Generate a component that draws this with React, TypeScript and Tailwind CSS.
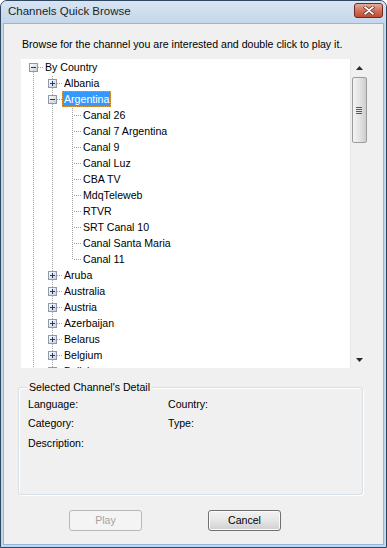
import React from "react";

type Row = { level: number; label: string; box?: "plus" | "minus"; selected?: boolean };

const rows: Row[] = [
  { level: 0, label: "By Country", box: "minus" },
  { level: 1, label: "Albania", box: "plus" },
  { level: 1, label: "Argentina", box: "minus", selected: true },
  { level: 2, label: "Canal 26" },
  { level: 2, label: "Canal 7 Argentina" },
  { level: 2, label: "Canal 9" },
  { level: 2, label: "Canal Luz" },
  { level: 2, label: "CBA TV" },
  { level: 2, label: "MdqTeleweb" },
  { level: 2, label: "RTVR" },
  { level: 2, label: "SRT Canal 10" },
  { level: 2, label: "Canal Santa Maria" },
  { level: 2, label: "Canal 11" },
  { level: 1, label: "Aruba", box: "plus" },
  { level: 1, label: "Australia", box: "plus" },
  { level: 1, label: "Austria", box: "plus" },
  { level: 1, label: "Azerbaijan", box: "plus" },
  { level: 1, label: "Belarus", box: "plus" },
  { level: 1, label: "Belgium", box: "plus" },
  { level: 1, label: "Bolivia", box: "plus" },
];

const padByLevel = ["pl-[22px]", "pl-[41px]", "pl-[60px]"];
const boxByLevel = ["left-[8px]", "left-[27px]", "left-[46px]"];

function Expander({ kind }: { kind: "plus" | "minus" }) {
  return (
    <svg width="9" height="9" viewBox="0 0 9 9" className="block">
      <defs>
        <linearGradient id="exg" x1="0" y1="0" x2="1" y2="1">
          <stop offset="0" stopColor="#ffffff" />
          <stop offset="1" stopColor="#c6cbd3" />
        </linearGradient>
      </defs>
      <rect x="0.5" y="0.5" width="8" height="8" fill="url(#exg)" stroke="#8f9aa6" shapeRendering="crispEdges" />
      <line x1="2" y1="4.5" x2="7" y2="4.5" stroke="#1c3a78" shapeRendering="crispEdges" />
      {kind === "plus" && <line x1="4.5" y1="2" x2="4.5" y2="7" stroke="#1c3a78" shapeRendering="crispEdges" />}
    </svg>
  );
}

function TreeLines() {
  const rowC = (i: number) => 8 + 16 * i + 0.5;
  const level1Rows = rows.map((r, i) => (r.level === 1 ? i : -1)).filter((i) => i >= 0);
  const leafRows = rows.map((r, i) => (r.level === 2 ? i : -1)).filter((i) => i >= 0);
  const s = { stroke: "#a0a0a0", strokeDasharray: "1 1", shapeRendering: "crispEdges" as const };
  return (
    <svg className="absolute left-0 top-0" width="329" height="330">
      <line x1="12.5" y1="13" x2="12.5" y2="330" {...s} />
      <line x1="17" y1={rowC(0)} x2="22" y2={rowC(0)} {...s} />
      <line x1="31.5" y1="17" x2="31.5" y2="330" {...s} />
      {level1Rows.map((i) => (
        <line key={"h1" + i} x1="36" y1={rowC(i)} x2="41" y2={rowC(i)} {...s} />
      ))}
      <line x1="51.5" y1="45" x2="51.5" y2={8 + 16 * 12} {...s} />
      {leafRows.map((i) => (
        <line key={"h2" + i} x1="53" y1={rowC(i)} x2="60" y2={rowC(i)} {...s} />
      ))}
    </svg>
  );
}

function Scrollbar() {
  return (
    <div className="w-[17px] h-full bg-[#f0f0f0] border-l border-[#e8e8e8] flex flex-col items-center">
      <div className="h-[17px] w-full flex items-center justify-center">
        <svg width="7" height="4" viewBox="0 0 7 4">
          <path d="M3.5 0 L7 4 L0 4 Z" fill="#2a2a2a" />
        </svg>
      </div>
      <div className="mt-[1px] w-[15px] h-[66px] rounded-[2px] border border-[#9c9c9c] bg-gradient-to-r from-[#f4f4f4] via-[#e4e4e4] to-[#cdcdcd] flex flex-col items-center justify-center gap-[1px]">
        <div className="w-[6px] h-[1px] bg-[#5a5a5a]" />
        <div className="w-[6px] h-[1px] bg-[#5a5a5a]" />
        <div className="w-[6px] h-[1px] bg-[#5a5a5a]" />
        <div className="w-[6px] h-[1px] bg-[#5a5a5a]" />
      </div>
      <div className="flex-1" />
      <div className="h-[17px] w-full flex items-center justify-center">
        <svg width="7" height="4" viewBox="0 0 7 4">
          <path d="M0 0 L7 0 L3.5 4 Z" fill="#2a2a2a" />
        </svg>
      </div>
    </div>
  );
}

export default function App() {
  return (
    <div className="w-[387px] h-[548px] flex flex-col bg-[#c3d6ea] border border-[#2f4660] rounded-t-[7px] font-['Liberation_Sans',Arial,sans-serif] text-black overflow-hidden">
      {/* Title bar */}
      <div className="h-[22px] shrink-0 flex items-center pl-[7px] pr-[3px] bg-gradient-to-b from-[#d7e4f1] to-[#c4d7eb]">
        <span className="text-[11.5px] text-[#1e1e1e] leading-none">Channels Quick Browse</span>
        <div className="flex-1" />
        <div className="mt-[-3px] w-[29px] h-[15px] rounded-[3px] border border-[#6e2b20] bg-gradient-to-b from-[#e6ab9c] via-[#d0715c] to-[#c04a30] flex items-center justify-center">
          <svg width="12" height="9" viewBox="0 0 12 9">
            <path d="M1 0.5 L6 4 L11 0.5 M1 8.5 L6 5 L11 8.5" stroke="#5a2a24" strokeWidth="3.2" fill="none" />
            <path d="M1.5 0.8 L6 4.2 L10.5 0.8 M1.5 8.2 L6 4.8 L10.5 8.2" stroke="#ffffff" strokeWidth="1.8" fill="none" />
          </svg>
        </div>
      </div>
      {/* Client area */}
      <div className="flex-1 mx-[2px] mb-[2px] bg-[#f0f0f0] border border-[#8fb8dc] flex flex-col">
        <div className="mt-[13px] pl-[18px] text-[10.6px] leading-[14px] whitespace-nowrap">
          Browse for the channel you are interested and double click to play it.
        </div>
        <div className="mt-[8px] ml-[17px] w-[346px] h-[309px] bg-white flex overflow-hidden">
          <div className="relative w-[329px] h-full overflow-hidden">
            <TreeLines />
            <div className="relative flex flex-col">
              {rows.map((r, i) => (
                <div key={i} className={"relative h-[16px] flex items-center " + padByLevel[r.level]}>
                  {r.box && (
                    <div className={"absolute top-[4px] " + boxByLevel[r.level]}>
                      <Expander kind={r.box} />
                    </div>
                  )}
                  <span
                    className={
                      "px-[2px] h-[16px] leading-[16px] text-[10.6px] whitespace-nowrap " +
                      (r.selected ? "bg-[#3399ff] text-white outline-1 outline-dotted outline-[#e09a3a] -outline-offset-1" : "")
                    }
                  >
                    {r.label}
                  </span>
                </div>
              ))}
            </div>
          </div>
          <Scrollbar />
        </div>
        {/* Group box */}
        <div className="relative mt-[19px] ml-[14px] w-[345px] h-[108px] border border-[#d5dfe5] rounded-[3px] shadow-[inset_1px_1px_0_#ffffff,1px_1px_0_#ffffff] text-[10.6px] leading-[14px]">
          <span className="absolute -top-[8px] left-[8px] px-[2px] bg-[#f0f0f0]">Selected Channel's Detail</span>
          <div className="mt-[9px] ml-[9px] flex">
            <span className="w-[140px]">Language:</span>
            <span>Country:</span>
          </div>
          <div className="mt-[5px] ml-[9px] flex">
            <span className="w-[140px]">Category:</span>
            <span>Type:</span>
          </div>
          <div className="mt-[6px] ml-[9px]">Description:</div>
        </div>
        <div className="mt-[15px] ml-[65px] flex gap-[66px] text-[10.6px]">
          <div className="w-[73px] h-[21px] rounded-[3px] border border-[#b5b9bc] bg-[#f4f4f4] text-[#a3a3a3] flex items-center justify-center">
            Play
          </div>
          <div className="w-[73px] h-[21px] rounded-[3px] border border-[#707070] bg-gradient-to-b from-[#f2f2f2] via-[#e6e6e6] to-[#cfcfcf] shadow-[inset_0_0_0_1px_#fbfbfb] flex items-center justify-center">
            Cancel
          </div>
        </div>
      </div>
    </div>
  );
}
